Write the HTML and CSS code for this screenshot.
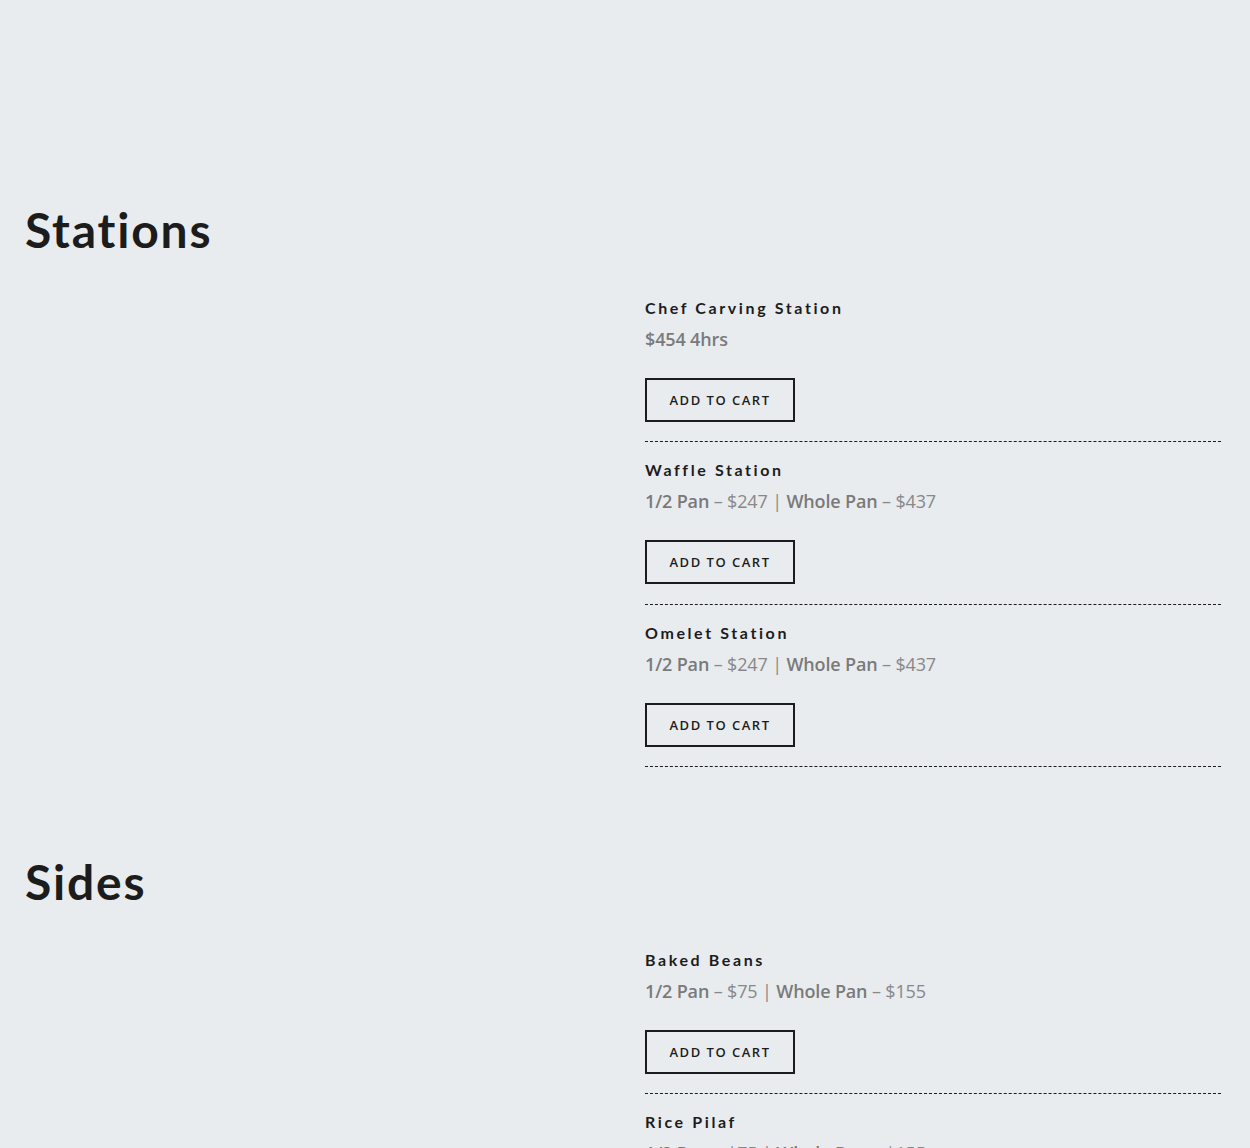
FILE: index.html
```html
<!DOCTYPE html>
<html lang="en">
<head>
<meta charset="utf-8">
<title>Menu</title>
<link rel="stylesheet" href="styles.css">
</head>
<body>
<main class="page">
  <section class="menu-section">
    <h2 class="section-title">Stations</h2>
    <div class="section-grid">
      <div class="section-aside"></div>
      <div class="items">
        <article class="item">
          <h3 class="item-title">Chef Carving Station</h3>
          <p class="item-price"><strong>$454 4hrs</strong></p>
          <button class="cart-btn" type="button">ADD TO CART</button>
        </article>
        <article class="item">
          <h3 class="item-title">Waffle Station</h3>
          <p class="item-price"><strong>1/2 Pan</strong> – $247 | <strong>Whole Pan</strong> – $437</p>
          <button class="cart-btn" type="button">ADD TO CART</button>
        </article>
        <article class="item">
          <h3 class="item-title">Omelet Station</h3>
          <p class="item-price"><strong>1/2 Pan</strong> – $247 | <strong>Whole Pan</strong> – $437</p>
          <button class="cart-btn" type="button">ADD TO CART</button>
        </article>
      </div>
    </div>
  </section>
  <section class="menu-section">
    <h2 class="section-title">Sides</h2>
    <div class="section-grid">
      <div class="section-aside"></div>
      <div class="items">
        <article class="item">
          <h3 class="item-title">Baked Beans</h3>
          <p class="item-price"><strong>1/2 Pan</strong> – $75 | <strong>Whole Pan</strong> – $155</p>
          <button class="cart-btn" type="button">ADD TO CART</button>
        </article>
        <article class="item">
          <h3 class="item-title">Rice Pilaf</h3>
          <p class="item-price"><strong>1/2 Pan</strong> – $75 | <strong>Whole Pan</strong> – $155</p>
          <button class="cart-btn" type="button">ADD TO CART</button>
        </article>
      </div>
    </div>
  </section>
</main>
</body>
</html>
```
FILE: styles.css
```css
html, body {
  margin: 0;
  padding: 0;
  background: #e9ecef;
}
body {
  font-family: "Open Sans", "Liberation Sans", sans-serif;
  color: #1c1c1c;
}
.page {
  padding: 201px 29px 0 25px;
}
.menu-section + .menu-section {
  margin-top: 86px;
}
.section-title {
  margin: 0;
  font-family: Lato, "Liberation Sans", sans-serif;
  font-weight: 700;
  font-size: 48px;
  line-height: 58px;
  color: #1c1c1c;
  letter-spacing: 1.8px;
}
.section-grid {
  display: grid;
  grid-template-columns: 620px 1fr;
  margin-top: 21px;
}
.item {
  padding: 18px 0 19.3px;
  border-bottom: 1px dashed #1c1c1c;
}
.item-title {
  margin: 0;
  font-family: Lato, "Liberation Sans", sans-serif;
  font-weight: 700;
  font-size: 16px;
  line-height: 20px;
  letter-spacing: 2.6px;
  color: #1c1c1c;
}
.item-price {
  margin: 7px 0 0;
  font-size: 18px;
  line-height: 28px;
  color: #888;
  letter-spacing: -0.15px;
}
.item-price strong {
  font-weight: 600;
  color: #7a7a7a;
}
.cart-btn {
  display: block;
  margin-top: 25px;
  width: 150px;
  height: 44px;
  padding: 0;
  background: transparent;
  border: 2px solid #1c1c1c;
  font-family: "Open Sans", "Liberation Sans", sans-serif;
  font-weight: 600;
  font-size: 13px;
  letter-spacing: 1.5px;
  color: #1c1c1c;
  cursor: pointer;
}
```
